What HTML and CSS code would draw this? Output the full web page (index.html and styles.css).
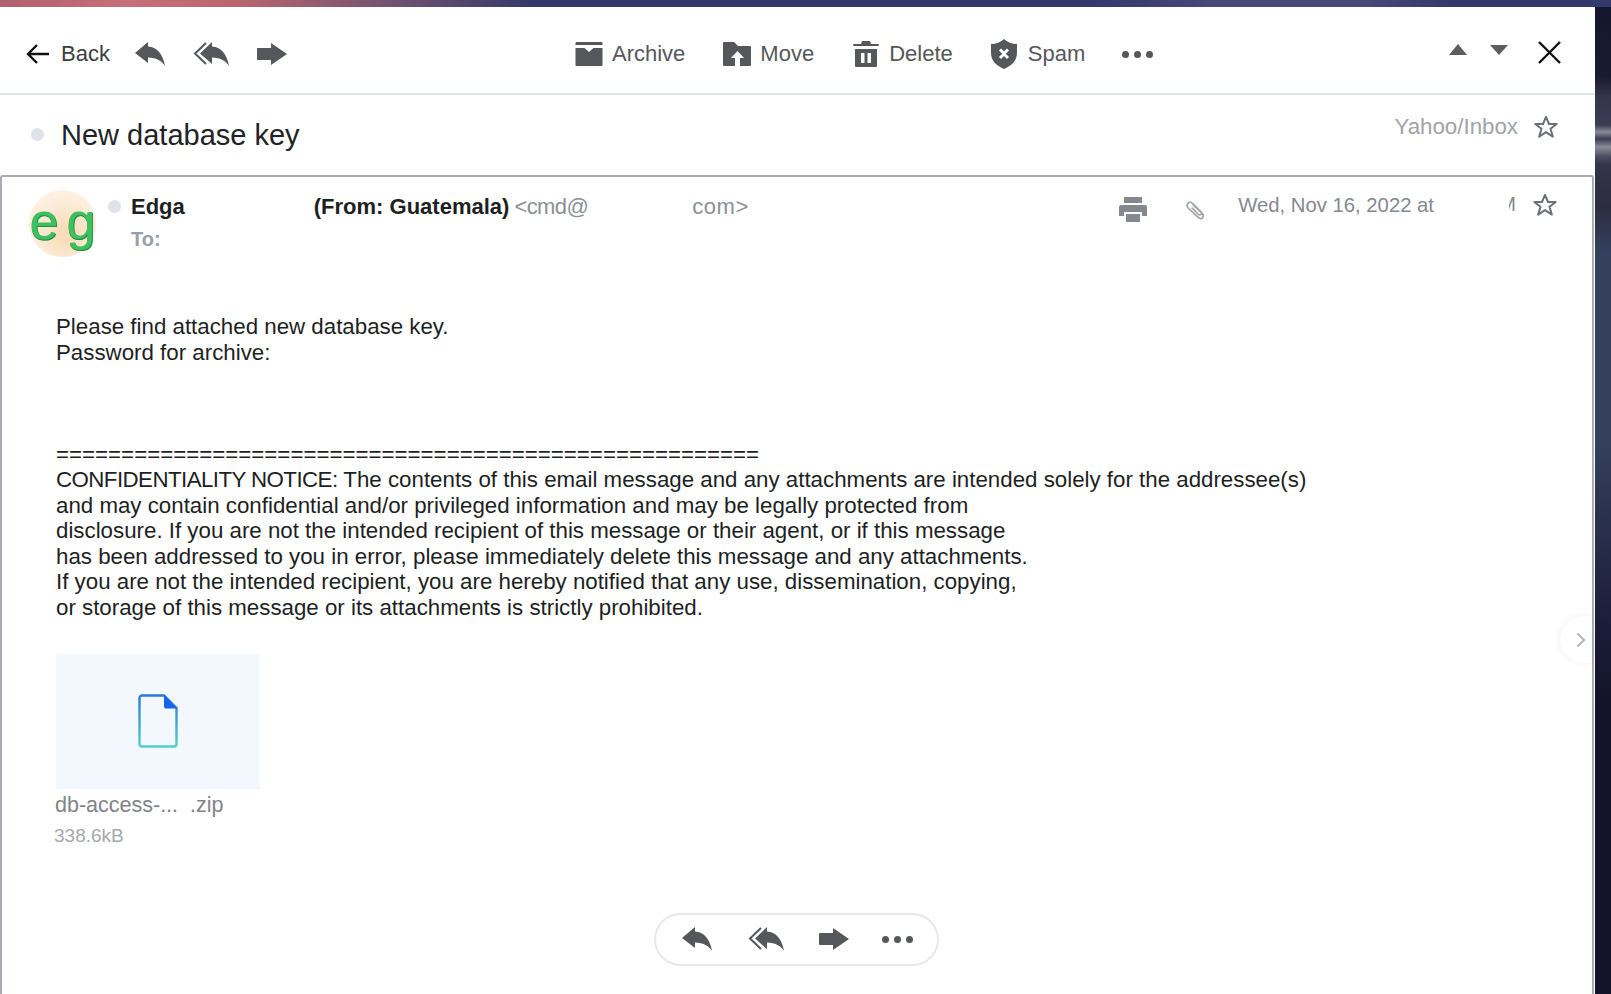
FILE: index.html
```html
<!DOCTYPE html>
<html lang="en">
<head>
    <meta charset="UTF-8">
    <meta name="viewport" content="width=device-width, initial-scale=1.0">
    <title>New database key</title>
    <link rel="stylesheet" href="styles.css">
</head>
<body>

    <!-- Iconos compartidos -->
    <svg class="sprite" aria-hidden="true">
        <symbol id="i-reply" viewBox="0 0 30 24">
            <path d="M0 11 13 0V4.500C22 5 28 12 30 24 27 19 21 15.500 13 15.500V21Z"/>
        </symbol>
        <symbol id="i-reply-all" viewBox="0 0 36 24">
            <path d="M13 1 2 11.500 13 22" fill="none" stroke="currentColor" stroke-width="2"/>
            <path d="M7 11.500 19 0V4.500C28 5 34 12 36 24 33 19 27 15.500 19 15.500V22Z"/>
        </symbol>
        <symbol id="i-forward" viewBox="0 0 30 22">
            <path d="M1 5H14V0L30 11 14 22V17H1A1 1 0 0 1 0 16V6A1 1 0 0 1 1 5Z"/>
        </symbol>
        <symbol id="i-star" viewBox="0 0 24 24">
            <path d="M12 1.800 15 9H22.700L16.500 13.800 18.800 21.600 12 17.100 5.200 21.600 7.500 13.800 1.300 9H9Z" fill="none" stroke="currentColor" stroke-width="2" stroke-linejoin="round"/>
        </symbol>
    </svg>

    <div class="top-strip"></div>

    <div class="desktop">
        <div class="window">

            <!-- Barra de acciones -->
            <div class="toolbar">
                <div class="tools-left">
                    <svg class="ico-back" viewBox="0 0 24 22"><path d="M23 11H2M11 2 2 11 11 20" fill="none" stroke="currentColor" stroke-width="2.400"/></svg>
                    <span class="back-label">Back</span>
                    <svg class="ico-reply"><use href="#i-reply"/></svg>
                    <svg class="ico-reply-all"><use href="#i-reply-all"/></svg>
                    <svg class="ico-forward"><use href="#i-forward"/></svg>
                </div>

                <div class="tools-center">
                    <div class="tool">
                        <svg class="tool__ico" viewBox="0 0 27 24"><path d="M0 1A1 1 0 0 1 1 0H26A1 1 0 0 1 27 1V3H0ZM0 6H9L13.500 10 18 6H27V23A1 1 0 0 1 26 24H1A1 1 0 0 1 0 23Z"/></svg>
                        <span>Archive</span>
                    </div>
                    <div class="tool">
                        <svg class="tool__ico" viewBox="0 0 28 24"><path d="M0 1A1 1 0 0 1 1 0H11L15 4H27A1 1 0 0 1 28 5V23A1 1 0 0 1 27 24H1A1 1 0 0 1 0 23Z"/><path d="M14.500 9 21 16H17V24H12V16H8Z" fill="#fff"/></svg>
                        <span>Move</span>
                    </div>
                    <div class="tool">
                        <svg class="tool__ico tool__ico--tall" viewBox="0 0 26 26"><path d="M9 0H17L18 3H25A1 1 0 0 1 25 5H1A1 1 0 0 1 1 3H8ZM2 8H24V25A1 1 0 0 1 23 26H3A1 1 0 0 1 2 25ZM8 12V22H11.500V12ZM14.500 12V22H18V12Z" fill-rule="evenodd"/></svg>
                        <span>Delete</span>
                    </div>
                    <div class="tool tool--spam">
                        <svg class="tool__ico tool__ico--shield" viewBox="0 0 26 30"><path d="M13 0C16 3 21 5 26 5V14C26 22 20 27 13 30 6 27 0 22 0 14V5C5 5 10 3 13 0Z"/><path d="M9 10.500 13 14.500 17 10.500M9 19 13 15 17 19" fill="none" stroke="#fff" stroke-width="3"/></svg>
                        <span>Spam</span>
                    </div>
                    <div class="dots"><i></i><i></i><i></i></div>
                </div>

                <div class="tools-right">
                    <span class="tri tri--up"></span>
                    <span class="tri tri--down"></span>
                    <svg class="ico-close" viewBox="0 0 23 23"><path d="M1 1 22 22M22 1 1 22" fill="none" stroke="currentColor" stroke-width="2.400"/></svg>
                </div>
            </div>

            <!-- Asunto -->
            <div class="subject">
                <span class="dot dot--subject"></span>
                <h1 class="subject__title">New database key</h1>
                <span class="subject__folder">Yahoo/Inbox</span>
                <svg class="star star--subject"><use href="#i-star"/></svg>
            </div>

            <!-- Mensaje -->
            <div class="card">
                <div class="msg-head">
                    <div class="avatar"><span>eg</span></div>
                    <span class="dot dot--sender"></span>
                    <div class="msg-meta">
                        <div class="msg-from">
                            <strong class="from-name">Edga</strong>
                            <strong class="from-country">(From: Guatemala)</strong>
                            <span class="from-mail">&lt;cmd@</span>
                            <span class="from-domain">com&gt;</span>
                            <div class="msg-side">
                                <svg class="ico-print" viewBox="0 0 28 25"><path d="M5 0H23V6H5ZM2 8H26A2 2 0 0 1 28 10V19H23V15H5V19H0V10A2 2 0 0 1 2 8ZM7 17H21V25H7Z"/></svg>
                                <svg class="ico-clip" viewBox="0 0 22 21"><path d="M8 4 18 13.500C21 16.500 17.500 21 14 18L3.500 8C0 4.500 4.500 0 8 3L17 12C18.500 14 16 16 14 14.500L7 7.500" fill="none" stroke="currentColor" stroke-width="1.700"/></svg>
                                <span class="msg-date">Wed, Nov 16, 2022 at</span>
                                <span class="msg-time"><span>M</span></span>
                                <svg class="star star--msg"><use href="#i-star"/></svg>
                            </div>
                        </div>
                        <div class="msg-to">To:</div>
                    </div>
                </div>

                <div class="msg-body">
                    <p class="msg-intro">Please find attached new database key.<br>Password for archive:</p>
                    <p>======================================================<br>
                    <span class="msg-caps">CONFIDENTIALITY NOTICE:</span> The contents of this email message and any attachments are intended solely for the addressee(s)<br>
                    and may contain confidential and/or privileged information and may be legally protected from<br>
                    disclosure. If you are not the intended recipient of this message or their agent, or if this message<br>
                    has been addressed to you in error, please immediately delete this message and any attachments.<br>
                    If you are not the intended recipient, you are hereby notified that any use, dissemination, copying,<br>
                    or storage of this message or its attachments is strictly prohibited.</p>

                    <div class="attach">
                        <div class="attach__tile">
                            <svg class="ico-file" viewBox="0 0 40 54">
                                <defs>
                                    <linearGradient id="fileGrad" x1="0" y1="0" x2="0" y2="1">
                                        <stop offset="0" stop-color="#2a77e0"/>
                                        <stop offset="1" stop-color="#4fd0cf"/>
                                    </linearGradient>
                                </defs>
                                <path d="M4 1.500H26L38.500 14V50A2.500 2.500 0 0 1 36 52.500H4A2.500 2.500 0 0 1 1.500 50V4A2.500 2.500 0 0 1 4 1.500Z" fill="none" stroke="url(#fileGrad)" stroke-width="2.400"/>
                                <path d="M26 1 39.500 14.500H28A2 2 0 0 1 26 12.500Z" fill="#1a62ea"/>
                            </svg>
                        </div>
                        <div class="attach__name">db-access-... &nbsp;.zip</div>
                        <div class="attach__size">338.6kB</div>
                    </div>
                </div>

                <div class="pill-row">
                    <div class="pill">
                        <svg class="ico-reply"><use href="#i-reply"/></svg>
                        <svg class="ico-reply-all"><use href="#i-reply-all"/></svg>
                        <svg class="ico-forward"><use href="#i-forward"/></svg>
                        <div class="dots"><i></i><i></i><i></i></div>
                    </div>
                </div>

                <div class="next-tab">
                    <svg viewBox="0 0 10 16"><path d="M1.500 1.500 8 8 1.500 14.500" fill="none" stroke="currentColor" stroke-width="2"/></svg>
                </div>
            </div>
        </div>

        <div class="wallpaper"></div>
    </div>

</body>
</html>
```

FILE: styles.css
```css
* {
    box-sizing: border-box;
}

html, body {
    height: 100%;
}

body {
    margin: 0;
    display: flex;
    flex-direction: column;
    overflow: hidden;
    font-family: "Liberation Sans", Arial, sans-serif;
    font-size: 22px;
    color: #1d1f23;
    background-color: #14152c;
}

.sprite {
    display: none;
}

.top-strip {
    height: 7px;
    flex: none;
    background: linear-gradient(90deg, #b0606e 0, #c66f7a 8%, #b8656f 15%, #6c5170 25%, #33396b 33%, #33396b 68%, #474778 75%, #474778 85%, #33396b 90%);
}

.desktop {
    flex: 1;
    min-height: 0;
    display: flex;
}

.window {
    width: 1595px;
    flex: none;
    display: flex;
    flex-direction: column;
    background-color: #fff;
}

.wallpaper {
    flex: 1;
    background: linear-gradient(180deg, #13162c 0, #191b33 70px, #34344c 90px, #3c3c54 118px, #8a8b96 125px, #3c3c54 132px, #8b8c96 140px, #4a4a60 150px, #34344a 158px, #2c2c3e 200px, #35405f 245px, #35405f 430px, #1b1d38 620px, #12132a 700px);
}

/* Barra de acciones */
.toolbar {
    height: 88px;
    flex: none;
    display: flex;
    align-items: center;
    padding: 8px 34px 0 26px;
    border-bottom: 2px solid #e3e6e8;
    color: #55575a;
}

.tools-left {
    width: 548px;
    display: flex;
    align-items: center;
}

.ico-back {
    width: 24px;
    height: 22px;
    color: #111;
}

.back-label {
    margin-left: 11px;
    color: #3c3e42;
}

.ico-reply,
.ico-reply-all,
.ico-forward {
    fill: currentColor;
    height: 24px;
}

.ico-reply {
    width: 30px;
}

.ico-reply-all {
    width: 36px;
}

.ico-forward {
    width: 30px;
    height: 22px;
}

.tools-left .ico-reply {
    margin-left: 25px;
}

.tools-left .ico-reply-all {
    margin-left: 28px;
}

.tools-left .ico-forward {
    margin-left: 28px;
}

.tools-center {
    display: flex;
    align-items: center;
    gap: 37px;
}

.tool {
    display: flex;
    align-items: center;
    gap: 9px;
}

.tool--spam {
    gap: 11px;
}

.tool__ico {
    width: 28px;
    height: 24px;
    margin-left: 1px;
    fill: currentColor;
}

.tool__ico--tall {
    height: 26px;
}

.tool__ico--shield {
    width: 26px;
    height: 30px;
}

.dots {
    display: flex;
    gap: 5px;
}

.dots i {
    width: 7px;
    height: 7px;
    border-radius: 50%;
    background-color: #55575a;
}

.tools-right {
    margin-left: auto;
    margin-top: -4px;
    display: flex;
    align-items: center;
}

.tri {
    width: 0;
    height: 0;
    border-left: 9px solid transparent;
    border-right: 9px solid transparent;
    margin-top: -5px;
}

.tri--up {
    border-bottom: 11px solid #5c5e62;
}

.tri--down {
    border-top: 10px solid #5c5e62;
    margin-left: 23px;
}

.ico-close {
    width: 23px;
    height: 23px;
    margin-left: 30px;
    color: #111;
}

/* Asunto */
.subject {
    height: 80px;
    flex: none;
    display: flex;
    align-items: center;
    padding: 0 37px 0 31px;
}

.dot {
    flex: none;
    border-radius: 50%;
    background-color: #dfe2e9;
}

.dot--subject {
    width: 13px;
    height: 13px;
    margin-top: -2px;
}

.subject__title {
    margin: 0 0 0 17px;
    font-size: 29px;
    font-weight: normal;
    color: #1f2226;
}

.subject__folder {
    margin-left: auto;
    margin-top: -16px;
    font-size: 22.3px;
    color: #a1a3a8;
}

.star {
    color: #6c6f75;
    width: 24px;
    height: 24px;
}

.star--subject {
    margin-left: 16px;
    margin-top: -16px;
}

/* Mensaje */
.card {
    position: relative;
    flex: 1;
    min-height: 0;
    width: 1594px;
    border: 2px solid #a9acb5;
    border-bottom: none;
    border-radius: 3px 3px 0 0;
}

.msg-head {
    display: flex;
    padding: 15px 35px 0 27px;
}

.avatar {
    width: 67px;
    height: 67px;
    margin-top: -2px;
    flex: none;
    display: flex;
    justify-content: center;
    align-items: center;
    border-radius: 50%;
    background: radial-gradient(circle at 55% 65%, #f8d9b2 0, #fcebd6 50%, #fff8ef 100%);
}

.avatar span {
    font-size: 52px;
    line-height: 1;
    letter-spacing: 8px;
    margin: -6px -8px 0 0;
    color: #3fc060;
    text-shadow: 0 1px 0 #1f8f46, 1px 1px 0 #1f8f46;
}

.dot--sender {
    width: 13px;
    height: 13px;
    margin: 8px 10px 0 12px;
}

.msg-meta {
    flex: 1;
    min-width: 0;
}

.msg-from {
    height: 30px;
    display: flex;
    align-items: center;
}

.from-country {
    margin-left: 129px;
}

.from-mail {
    margin-left: 5px;
    letter-spacing: -0.6px;
    color: #8d9096;
}

.from-domain {
    margin-left: 104px;
    letter-spacing: 0.6px;
    color: #8d9096;
}

.msg-side {
    margin-left: auto;
    display: flex;
    align-items: center;
    color: #85888e;
}

.ico-print {
    width: 28px;
    height: 25px;
    fill: currentColor;
    margin-top: 4px;
}

.ico-clip {
    width: 21px;
    height: 21px;
    margin-left: 38px;
    margin-top: 6px;
    color: #a0a3a8;
}

.msg-date {
    margin-left: 32px;
    margin-top: -4px;
    font-size: 20.3px;
}

.msg-time {
    width: 7px;
    height: 24px;
    margin-left: 75px;
    margin-top: -4px;
    overflow: hidden;
    display: flex;
    justify-content: flex-end;
    font-size: 20px;
}

.star--msg {
    margin-left: 17px;
    margin-top: -4px;
}

.msg-to {
    margin-top: 6px;
    font-size: 20px;
    font-weight: bold;
    color: #9a9ea6;
}

.msg-body {
    margin-top: 57px;
    padding-left: 54px;
    font-size: 22.3px;
    line-height: 25.5px;
    color: #1d1f23;
}

.msg-body p {
    margin: 0;
}

.msg-body .msg-intro {
    margin-bottom: 76.5px;
}

.msg-caps {
    letter-spacing: -0.56px;
}

/* Adjunto */
.attach {
    margin-top: 33.5px;
}

.attach__tile {
    width: 204px;
    height: 135px;
    display: flex;
    justify-content: center;
    align-items: center;
    background-color: #f3f7fe;
}

.ico-file {
    width: 40px;
    height: 54px;
}

.attach__name {
    margin: 4px 0 0 -1px;
    font-size: 21.5px;
    line-height: 24px;
    color: #808488;
}

.attach__size {
    margin: 8px 0 0 -2px;
    font-size: 19px;
    line-height: 22px;
    color: #a6a8ad;
}

/* Acciones inferiores */
.pill-row {
    display: flex;
    justify-content: center;
    margin-top: 66px;
    padding-right: 2px;
}

.pill {
    width: 285px;
    height: 53px;
    display: flex;
    align-items: center;
    padding-left: 26px;
    border: 2px solid #e6e8ec;
    border-radius: 27px;
    color: #55575a;
}

.pill .ico-reply-all {
    margin-left: 36px;
}

.pill .ico-forward {
    margin-left: 35px;
}

.pill .dots {
    margin-left: 33px;
}

.next-tab {
    position: absolute;
    top: 439px;
    right: 0;
    width: 32px;
    height: 47px;
    padding-left: 9px;
    display: flex;
    align-items: center;
    justify-content: center;
    border-radius: 24px 0 0 24px;
    background-color: #fff;
    box-shadow: -1px 0 6px rgba(0, 0, 0, 0.06);
    color: #b4b6ba;
}

.next-tab svg {
    width: 10px;
    height: 16px;
}
```
